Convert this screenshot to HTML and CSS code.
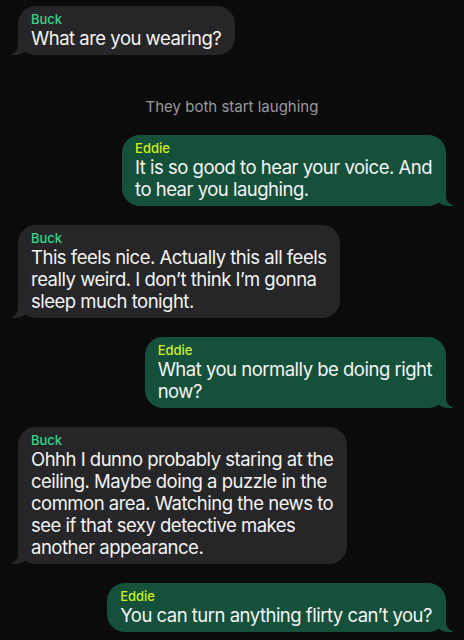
FILE: index.html
```html
<!DOCTYPE html>
<html lang="en">
<head>
    <meta charset="UTF-8">
    <meta name="viewport" content="width=device-width, initial-scale=1.0">
    <title>Buck &amp; Eddie</title>
    <link rel="stylesheet" href="styles.css">
</head>
<body>

    <div class="thread">
        <div class="bubble them">
            <div class="name">Buck</div>
            <div class="text">What are you wearing?</div>
        </div>

        <div class="note">They both start laughing</div>

        <div class="bubble me">
            <div class="name">Eddie</div>
            <div class="text">It is so good to hear your voice. And<br>to hear you laughing.</div>
        </div>

        <div class="bubble them">
            <div class="name">Buck</div>
            <div class="text">This feels nice. Actually this all feels<br>really weird. I don’t think I’m gonna<br>sleep much tonight.</div>
        </div>

        <div class="bubble me">
            <div class="name">Eddie</div>
            <div class="text">What you normally be doing right<br>now?</div>
        </div>

        <div class="bubble them">
            <div class="name">Buck</div>
            <div class="text">Ohhh I dunno probably staring at the<br>ceiling. Maybe doing a puzzle in the<br>common area. Watching the news to<br>see if that sexy detective makes<br>another appearance.</div>
        </div>

        <div class="bubble me">
            <div class="name">Eddie</div>
            <div class="text">You can turn anything flirty can’t you?</div>
        </div>
    </div>

</body>
</html>
```

FILE: styles.css
```css
body {
    margin: 0;
    background-color: #0b0b0b;
    font-family: Inter, "Noto Sans", sans-serif;
    color: #f4f4f4;
    overflow: hidden;
}

.thread {
    display: flex;
    flex-direction: column;
    gap: 19px;
    padding: 6px 18px 0;
}

.bubble {
    position: relative;
    max-width: 340px;
    padding: 5px 14px 6px 13px;
    border-radius: 18px;
}

.bubble.them {
    align-self: flex-start;
    background-color: #262628;
}

.bubble.me {
    align-self: flex-end;
    background-color: #15503a;
}

/* tails */
.bubble::before,
.bubble::after {
    content: "";
    position: absolute;
    bottom: 0;
    height: 22px;
}

.bubble.them::before {
    left: -7px;
    width: 20px;
    background-color: #262628;
    border-bottom-right-radius: 16px 14px;
}

.bubble.them::after {
    left: -26px;
    width: 26px;
    background-color: #0b0b0b;
    border-bottom-right-radius: 10px;
}

.bubble.me::before {
    right: -7px;
    width: 20px;
    background-color: #15503a;
    border-bottom-left-radius: 16px 14px;
}

.bubble.me::after {
    right: -26px;
    width: 26px;
    background-color: #0b0b0b;
    border-bottom-left-radius: 10px;
}

.name {
    font-size: 13px;
    font-weight: 500;
    line-height: 16px;
}

.them .name {
    color: #38d38b;
}

.me .name {
    color: #d3ef1c;
}

.text {
    font-size: 18.5px;
    letter-spacing: -0.5px;
    line-height: 22px;
}

.note {
    padding-top: 24px;
    text-align: center;
    font-size: 15px;
    line-height: 18px;
    color: #9a9a9a;
}
```
